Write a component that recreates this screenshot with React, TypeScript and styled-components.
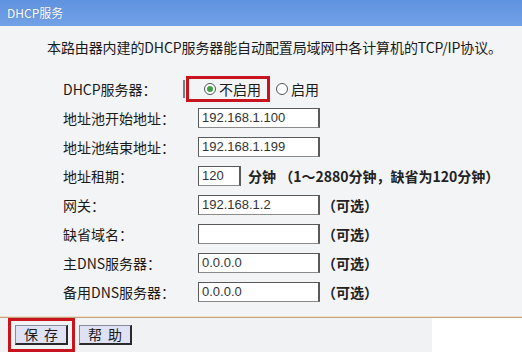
import React from 'react';
import styled, { createGlobalStyle } from 'styled-components';

const GlobalStyle = createGlobalStyle`
  html, body {
    margin: 0;
    padding: 0;
    background: #ffffff;
  }
  body {
    font-family: "Noto Sans CJK SC", "Liberation Sans", sans-serif;
    color: #1a1a1a;
  }
`;

const Page = styled.div`
  width: 522px;
  height: 352px;
  overflow: hidden;
  display: flex;
  flex-direction: column;
`;

const Header = styled.div`
  height: 26px;
  background: linear-gradient(#5f92df, #72a1e6);
  color: #ffffff;
  font-size: 12px;
  line-height: 26px;
  padding-left: 7px;
  text-shadow: 0 0 1px rgba(0, 0, 0, 0.25);
`;

const Body = styled.div`
  background: #f3f4f6;
  padding-top: 8px;
  height: 291px;
  box-sizing: border-box;
`;

const Intro = styled.div`
  padding-left: 47px;
  font-size: 14px;
  line-height: 26px;
  margin-bottom: 14px;
  letter-spacing: -0.1px;
`;

const Form = styled.div`
  display: grid;
  grid-template-columns: 135px 1fr;
  grid-auto-rows: 29px;
  padding-left: 63px;
  align-items: center;
`;

const Label = styled.div`
  font-size: 14px;
  line-height: 20px;
  white-space: nowrap;
`;

const Field = styled.div`
  display: flex;
  align-items: center;
  gap: 2px;
  height: 29px;
`;

const Input = styled.div<{ $w?: number }>`
  width: ${p => p.$w ?? 122}px;
  height: 20px;
  box-sizing: border-box;
  background: #ffffff;
  border: 1px solid #5a5a5a;
  border-right-width: 2px;
  border-bottom-color: #8a8a8a;
  font-family: "Liberation Sans", Arial, sans-serif;
  font-size: 13px;
  line-height: 18px;
  padding-left: 3px;
  color: #333;
`;

const Note = styled.span<{ $pad?: boolean }>`
  font-size: 14px;
  font-weight: bold;
  color: #222;
  white-space: nowrap;
  padding-left: ${p => (p.$pad ? 5 : 0)}px;
`;

const RadioGroup = styled.div`
  display: flex;
  align-items: center;
  margin-left: -15px;
`;

const Marker = styled.span`
  width: 2px;
  height: 18px;
  background: #7d7d7d;
  margin-right: 1px;
`;

const Highlight = styled.div`
  display: flex;
  align-items: center;
  height: 26px;
  box-sizing: border-box;
  border: 3px solid #c8141e;
  padding: 0 6px 0 15px;
  margin-right: 6px;
`;

const Radio = styled.span<{ $on?: boolean }>`
  width: 12px;
  height: 12px;
  box-sizing: border-box;
  border-radius: 50%;
  border: 1px solid #555;
  background: #fff;
  display: inline-flex;
  align-items: center;
  justify-content: center;
  margin-right: 3px;
  &::after {
    content: '';
    width: 6px;
    height: 6px;
    border-radius: 50%;
    background: ${p => (p.$on ? '#3fa13f' : 'transparent')};
  }
`;

const RadioText = styled.span`
  font-size: 14px;
  line-height: 20px;
`;

const Divider = styled.div`
  height: 1px;
  background: #c7a27c;
  box-shadow: 0 -1px 0 #ede0cf, 0 1px 0 #f7ead9;
`;

const Footer = styled.div`
  flex: 1;
  display: flex;
`;

const ButtonBar = styled.div`
  width: 432px;
  background: #f1f2f4;
  display: flex;
  align-items: center;
  padding-left: 8px;
  gap: 4px;
  box-sizing: border-box;
`;

const Blank = styled.div`
  flex: 1;
  background: #ffffff;
`;

const Frame = styled.div<{ $on?: boolean }>`
  border: 3px solid ${p => (p.$on ? '#c8141e' : 'transparent')};
  padding: 4px;
`;

const Button = styled.div`
  width: 53px;
  height: 20px;
  box-sizing: border-box;
  background: #dfe1f5;
  border: 1px solid #8a8a9a;
  border-right: 2px solid #2a2a2a;
  border-bottom: 2px solid #2a2a2a;
  font-size: 14px;
  line-height: 17px;
  text-align: center;
  letter-spacing: 6px;
  text-indent: 6px;
`;

const rows: { label: string; value?: string; w?: number; note?: string }[] = [
  { label: '地址池开始地址：', value: '192.168.1.100' },
  { label: '地址池结束地址：', value: '192.168.1.199' },
  { label: '地址租期：', value: '120', w: 43, note: '分钟 （1～2880分钟，缺省为120分钟）' },
  { label: '网关：', value: '192.168.1.2', note: '（可选）' },
  { label: '缺省域名：', value: '', note: '（可选）' },
  { label: '主DNS服务器：', value: '0.0.0.0', note: '（可选）' },
  { label: '备用DNS服务器：', value: '0.0.0.0', note: '（可选）' },
];

export default function App() {
  return (
    <Page>
      <GlobalStyle />
      <Header>DHCP服务</Header>
      <Body>
        <Intro>本路由器内建的DHCP服务器能自动配置局域网中各计算机的TCP/IP协议。</Intro>
        <Form>
          <Label>DHCP服务器：</Label>
          <Field>
            <RadioGroup>
              <Marker />
              <Highlight>
                <Radio $on />
                <RadioText>不启用</RadioText>
              </Highlight>
              <Radio />
              <RadioText>启用</RadioText>
            </RadioGroup>
          </Field>
          {rows.map(r => (
            <React.Fragment key={r.label}>
              <Label>{r.label}</Label>
              <Field>
                <Input $w={r.w}>{r.value}</Input>
                {r.note && <Note $pad={!!r.w}>{r.note}</Note>}
              </Field>
            </React.Fragment>
          ))}
        </Form>
      </Body>
      <Divider />
      <Footer>
        <ButtonBar>
          <Frame $on>
            <Button>保存</Button>
          </Frame>
          <Button>帮助</Button>
        </ButtonBar>
        <Blank />
      </Footer>
    </Page>
  );
}
